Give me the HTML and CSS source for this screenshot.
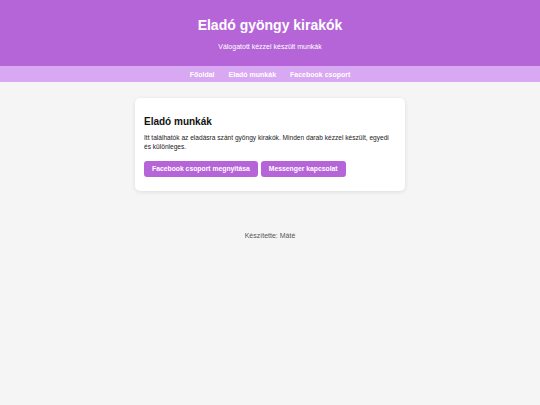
FILE: index.html
```html
<!DOCTYPE html>
<html lang="hu">
<head>
<meta charset="utf-8">
<title>Eladó gyöngy kirakók</title>
<link rel="stylesheet" href="styles.css">
</head>
<body>
<header class="site-header">
  <h1 class="site-title">Eladó gyöngy kirakók</h1>
  <p class="site-subtitle">Válogatott kézzel készült munkák</p>
</header>
<nav class="site-nav">
  <a href="#" class="nav-link">Főoldal</a>
  <a href="#" class="nav-link">Eladó munkák</a>
  <a href="#" class="nav-link">Facebook csoport</a>
</nav>
<main class="content">
  <section class="card">
    <h2 class="card-title">Eladó munkák</h2>
    <p class="card-text">Itt találhatók az eladásra szánt gyöngy kirakók. Minden darab kézzel készült, egyedi és különleges.</p>
    <div class="actions">
      <a href="#" class="btn">Facebook csoport megnyitása</a>
      <a href="#" class="btn">Messenger kapcsolat</a>
    </div>
  </section>
</main>
<footer class="site-footer">Készítette: Máté</footer>
</body>
</html>
```

FILE: styles.css
```css
* { box-sizing: border-box; }
body {
  margin: 0;
  background: #f5f5f5;
  font-family: "Liberation Sans", Arial, sans-serif;
  color: #222;
}
.site-header {
  background: #b565d8;
  color: #fff;
  text-align: center;
  padding: 16px 10px 15px;
}
.site-title {
  margin: 0;
  font-size: 14px;
  line-height: 18px;
  font-weight: bold;
}
.site-subtitle {
  margin: 8px 0 0;
  font-size: 7px;
  line-height: 9px;
}
.site-nav {
  background: #d8a8f2;
  display: flex;
  justify-content: center;
  gap: 14px;
  height: 16px;
  align-items: center;
}
.nav-link {
  color: #fff;
  text-decoration: none;
  font-size: 7px;
  font-weight: bold;
}
.content {
  padding-top: 16px;
}
.card {
  width: 270px;
  margin: 0 auto;
  background: #fff;
  border-radius: 5px;
  padding: 11px 9px 14px;
  box-shadow: 0 1px 4px rgba(0,0,0,0.1);
}
.card-title {
  margin: 5.5px 0 0;
  font-size: 10px;
  line-height: 13px;
  color: #111;
}
.card-text {
  margin: 5.5px 0 0;
  max-width: 248px;
  font-size: 6.6px;
  line-height: 9px;
  color: #222;
}
.actions {
  display: flex;
  gap: 3px;
  margin-top: 10px;
}
.btn {
  display: inline-block;
  background: #b565d8;
  color: #fff;
  text-decoration: none;
  font-size: 6.8px;
  font-weight: bold;
  line-height: 16px;
  height: 16px;
  padding: 0 8px;
  border-radius: 3px;
}
.site-footer {
  text-align: center;
  font-size: 7px;
  line-height: 9px;
  color: #555;
  margin-top: 40px;
}
```
